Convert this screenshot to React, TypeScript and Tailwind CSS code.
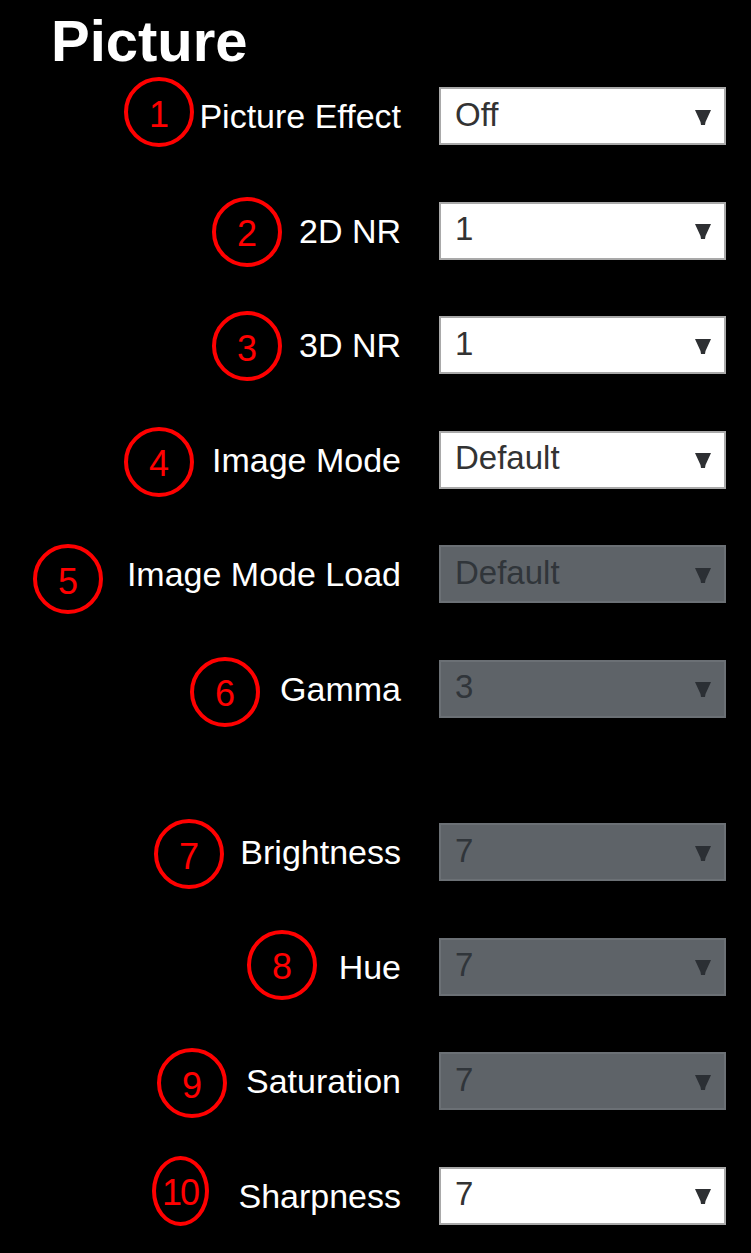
import clsx from 'clsx';

type Row = {
  n: string;
  label: string;
  value: string;
  disabled?: boolean;
  cx: number; // circle centre x, page coords
  dy: number; // circle offset from row centre
  w?: number;
  extraTop?: boolean;
};

const rows: Row[] = [
  { n: '1', label: 'Picture Effect', value: 'Off', cx: 159, dy: -4 },
  { n: '2', label: '2D NR', value: '1', cx: 247, dy: 1 },
  { n: '3', label: '3D NR', value: '1', cx: 247, dy: 1 },
  { n: '4', label: 'Image Mode', value: 'Default', cx: 159, dy: 2 },
  { n: '5', label: 'Image Mode Load', value: 'Default', disabled: true, cx: 68, dy: 5 },
  { n: '6', label: 'Gamma', value: '3', disabled: true, cx: 225, dy: 3 },
  { n: '7', label: 'Brightness', value: '7', disabled: true, cx: 189, dy: 2, extraTop: true },
  { n: '8', label: 'Hue', value: '7', disabled: true, cx: 282, dy: -2 },
  { n: '9', label: 'Saturation', value: '7', disabled: true, cx: 192, dy: 2 },
  { n: '10', label: 'Sharpness', value: '7', cx: 180, dy: -5, w: 57 },
];

function Arrow({ disabled }: { disabled?: boolean }) {
  return (
    <svg width="16" height="15" viewBox="0 0 16 15" className="mt-[2px] shrink-0">
      <polygon
        points="0,0 16,0 10.5,12 10,15 6,15 5.5,12"
        fill={disabled ? '#2b2f34' : '#2e3033'}
      />
    </svg>
  );
}

function Select({ value, disabled }: { value: string; disabled?: boolean }) {
  return (
    <div
      className={clsx(
        'flex h-[58px] w-[287px] items-center justify-between border-2 pl-[14px] pr-[13px] text-[33px] leading-none',
        disabled
          ? 'border-[#6b7075] bg-[#5e6368] text-[#30353a]'
          : 'border-[#a9a9a9] bg-white text-[#333333]'
      )}
    >
      <span className="-mt-[4px]">{value}</span>
      <Arrow disabled={disabled} />
    </div>
  );
}

export default function App() {
  return (
    <div
      className="h-[1253px] w-[751px] overflow-hidden bg-black"
      style={{ fontFamily: '"Liberation Sans", Arial, sans-serif' }}
    >
      <h1 className="pl-[51px] pt-[12px] text-[58px] font-bold leading-[58px] text-white">
        Picture
      </h1>
      <div className="mt-[17px] flex flex-col gap-[56.5px]">
        {rows.map((r) => (
          <div
            key={r.n}
            className={clsx('relative flex h-[58px] items-center', r.extraTop && 'mt-[49px]')}
          >
            <div className="w-[401px] text-right text-[34px] leading-none text-white">
              <span className="inline-block">{r.label}</span>
            </div>
            <div className="ml-[38px]">
              <Select value={r.value} disabled={r.disabled} />
            </div>
            <div
              className="absolute flex h-[70px] items-center justify-center rounded-[50%] border-[4px] border-[#ff0000] text-[36px] leading-none text-[#ff0000]"
              style={{
                width: r.w ?? 70,
                left: r.cx - (r.w ?? 70) / 2,
                top: 29 + r.dy - 35,
              }}
            >
              <span className={clsx('mt-[5px]', r.n === '10' && 'tracking-[-2px]')}>{r.n}</span>
            </div>
          </div>
        ))}
      </div>
    </div>
  );
}
